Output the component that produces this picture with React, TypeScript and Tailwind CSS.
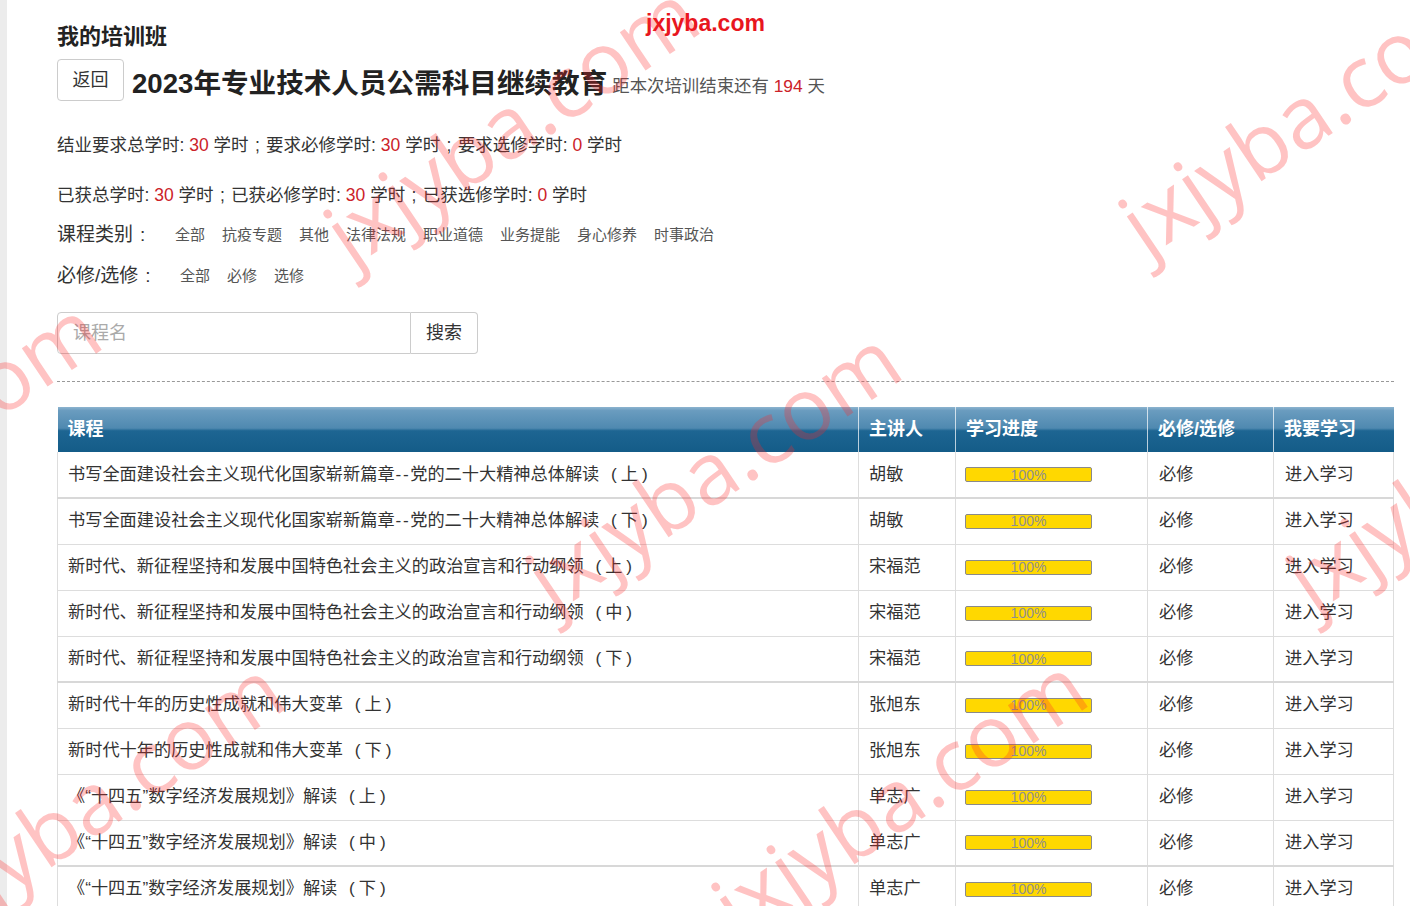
import React from 'react';

const courses = [
  { title: '书写全面建设社会主义现代化国家崭新篇章--党的二十大精神总体解读', part: '上', teacher: '胡敏', thick: true },
  { title: '书写全面建设社会主义现代化国家崭新篇章--党的二十大精神总体解读', part: '下', teacher: '胡敏' },
  { title: '新时代、新征程坚持和发展中国特色社会主义的政治宣言和行动纲领', part: '上', teacher: '宋福范' },
  { title: '新时代、新征程坚持和发展中国特色社会主义的政治宣言和行动纲领', part: '中', teacher: '宋福范' },
  { title: '新时代、新征程坚持和发展中国特色社会主义的政治宣言和行动纲领', part: '下', teacher: '宋福范', thick: true },
  { title: '新时代十年的历史性成就和伟大变革', part: '上', teacher: '张旭东' },
  { title: '新时代十年的历史性成就和伟大变革', part: '下', teacher: '张旭东' },
  { title: '《“十四五”数字经济发展规划》解读', part: '上', teacher: '单志广' },
  { title: '《“十四五”数字经济发展规划》解读', part: '中', teacher: '单志广', thick: true },
  { title: '《“十四五”数字经济发展规划》解读', part: '下', teacher: '单志广' },
];

const categories = ['全部', '抗疫专题', '其他', '法律法规', '职业道德', '业务提能', '身心修养', '时事政治'];
const types = ['全部', '必修', '选修'];

function Red({ children }: { children: React.ReactNode }) {
  return <span className="text-[#cc2229]">{children}</span>;
}

function Semi() {
  return <span className="inline-block w-[1em] text-center">;</span>;
}

function CourseTitle({ title, part }: { title: string; part: string }) {
  const pieces = title.split('--');
  return (
    <>
      {pieces.map((p, i) => (
        <React.Fragment key={i}>
          {i > 0 && <span className="tracking-[1.6px] pl-[1px]">--</span>}
          {p}
        </React.Fragment>
      ))}
      <span className="inline-block w-[1.25em] text-right pr-[4px]">(</span>
      {part}
      <span className="inline-block w-[1.25em] text-left pl-[4px]">)</span>
    </>
  );
}

function Progress() {
  return (
    <div className="w-[127px] h-[15px] border border-[#8a8a8a] rounded-[2px] bg-[#ffd800] flex items-center justify-center text-[14px] leading-none text-[#8f8f8f]">
      100%
    </div>
  );
}

export default function App() {
  return (
    <div className="relative w-full h-[906px] overflow-hidden bg-white flex font-['Liberation_Sans','Noto_Sans_CJK_SC',sans-serif] text-[#333]">
      <div className="w-[7px] shrink-0 bg-[#ececec]" />

      <div className="flex-1 pl-[50px] pr-[17px] pt-[22px]">
        <h2 className="text-[22px] font-bold leading-[30px] text-[#222]">我的培训班</h2>

        <div className="flex items-center mt-[6px]">
          <button className="w-[67px] h-[42px] border border-[#ccc] rounded-[4px] bg-white text-[18px] text-[#333]">返回</button>
          <h1 className="ml-[8px] text-[27.6px] font-bold leading-[36px] text-[#222] mt-[8px]">2023年专业技术人员公需科目继续教育</h1>
          <span className="ml-[5px] text-[17.4px] text-[#555] mt-[12px]">
            距本次培训结束还有 <Red>194</Red> 天
          </span>
        </div>

        <p className="mt-[31px] text-[17.5px] leading-[24px]">
          结业要求总学时: <Red>30</Red> 学时<Semi />要求必修学时: <Red>30</Red> 学时<Semi />要求选修学时: <Red>0</Red> 学时
        </p>
        <p className="mt-[26px] text-[17.5px] leading-[24px]">
          已获总学时: <Red>30</Red> 学时<Semi />已获必修学时: <Red>30</Red> 学时<Semi />已获选修学时: <Red>0</Red> 学时
        </p>

        <div className="flex items-center mt-[14px] h-[28px]">
          <span className="w-[118px] shrink-0 text-[19px] text-[#333] whitespace-nowrap">
            课程类别<span className="inline-block w-[1em] text-center">:</span>
          </span>
          <div className="flex gap-[17px] text-[15px] text-[#555]">
            {categories.map((c) => (
              <span key={c}>{c}</span>
            ))}
          </div>
        </div>
        <div className="flex items-center mt-[13px] h-[28px]">
          <span className="w-[123px] shrink-0 text-[19px] text-[#333] whitespace-nowrap">
            必修/选修<span className="inline-block w-[1em] text-center">:</span>
          </span>
          <div className="flex gap-[17px] text-[15px] text-[#555]">
            {types.map((c) => (
              <span key={c}>{c}</span>
            ))}
          </div>
        </div>

        <div className="flex mt-[22px] w-[421px] h-[42px]">
          <input
            placeholder="课程名"
            className="w-[354px] h-full border border-[#ccc] rounded-l-[4px] pl-[15px] text-[18px] placeholder:text-[#aaa] outline-none"
          />
          <button className="w-[67px] h-full border border-l-0 border-[#ccc] rounded-r-[4px] bg-white text-[18px] text-[#333]">搜索</button>
        </div>

        <div className="mt-[27px] border-t border-dashed border-[#999]" />

        <table className="mt-[25px] w-full border-collapse table-fixed">
          <colgroup>
            <col className="w-[801px]" />
            <col className="w-[97px]" />
            <col className="w-[192px]" />
            <col className="w-[126px]" />
            <col className="w-[120px]" />
          </colgroup>
          <thead>
            <tr className="h-[45px] bg-[linear-gradient(to_bottom,#8db4cf_0%,#6a9cbf_8%,#4f89b0_47%,#1d6592_53%,#145c88_100%)] text-white text-[18px] font-bold text-left">
              <th className="pl-[10px] border-r border-white/70">课程</th>
              <th className="pl-[10px] border-r border-white/70">主讲人</th>
              <th className="pl-[10px] border-r border-white/70">学习进度</th>
              <th className="pl-[10px] border-r border-white/70">必修/选修</th>
              <th className="pl-[10px]">我要学习</th>
            </tr>
          </thead>
          <tbody className="text-[17.2px] text-[#333]">
            {courses.map((c, i) => (
              <tr key={i} className={c.thick ? 'h-[46px] border-b-2 border-[#d8d8d8]' : 'h-[46px] border-b border-[#ddd]'}>
                <td className="pl-[10px] border-x border-[#ddd] whitespace-nowrap">
                  <CourseTitle title={c.title} part={c.part} />
                </td>
                <td className="pl-[10px] border-r border-[#ddd]">{c.teacher}</td>
                <td className="pl-[9px] border-r border-[#ddd]">
                  <Progress />
                </td>
                <td className="pl-[11px] border-r border-[#ddd]">必修</td>
                <td className="pl-[11px] border-r border-[#ddd]">进入学习</td>
              </tr>
            ))}
          </tbody>
        </table>
      </div>

      {/* top label */}
      <div className="absolute left-[646px] top-[6px] text-[23px] font-bold text-[#e8161e] font-['Liberation_Sans',sans-serif]">
        jxjyba.com
      </div>

      {/* watermarks */}
      <div className="pointer-events-none absolute inset-0 font-['Open_Sans',sans-serif] text-[86px] leading-none text-[rgba(255,40,40,0.28)]">
        <span className="absolute left-[510px] top-[122px] -translate-x-1/2 -translate-y-1/2 -rotate-[34deg] whitespace-nowrap">jxjyba.com</span>
        <span className="absolute left-[1305px] top-[112px] -translate-x-1/2 -translate-y-1/2 -rotate-[34deg] whitespace-nowrap">jxjyba.com</span>
        <span className="absolute left-[-88px] top-[438px] -translate-x-1/2 -translate-y-1/2 -rotate-[34deg] whitespace-nowrap">jxjyba.com</span>
        <span className="absolute left-[712px] top-[468px] -translate-x-1/2 -translate-y-1/2 -rotate-[34deg] whitespace-nowrap">jxjyba.com</span>
        <span className="absolute left-[1472px] top-[468px] -translate-x-1/2 -translate-y-1/2 -rotate-[34deg] whitespace-nowrap">jxjyba.com</span>
        <span className="absolute left-[95px] top-[798px] -translate-x-1/2 -translate-y-1/2 -rotate-[34deg] whitespace-nowrap">jxjyba.com</span>
        <span className="absolute left-[898px] top-[795px] -translate-x-1/2 -translate-y-1/2 -rotate-[34deg] whitespace-nowrap">jxjyba.com</span>
      </div>
    </div>
  );
}
